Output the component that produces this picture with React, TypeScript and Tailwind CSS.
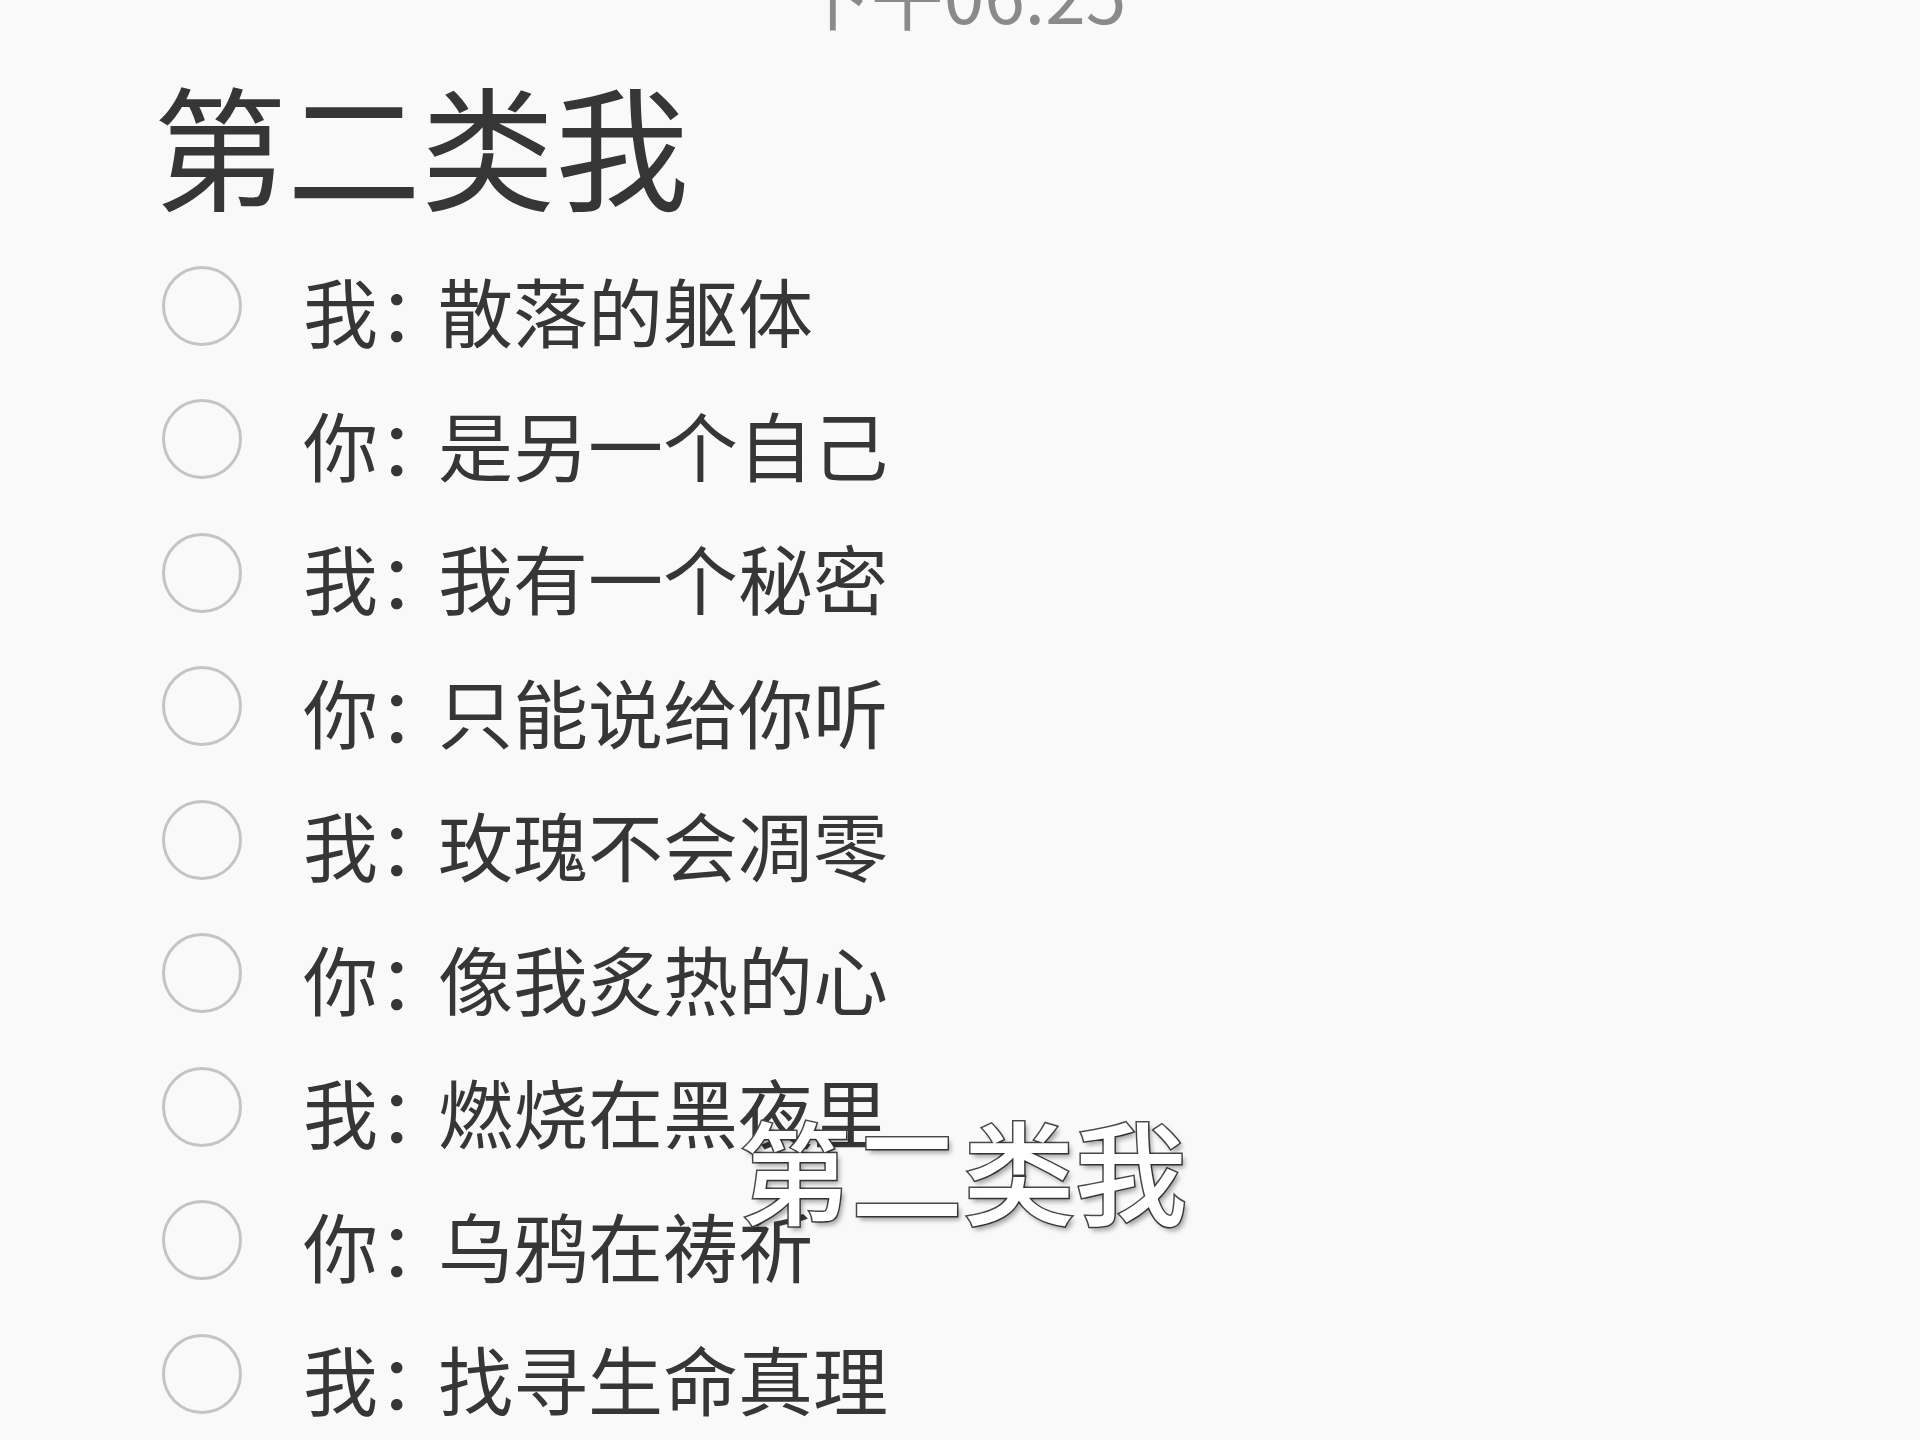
import React from "react";

const lines = [
  "我：散落的躯体",
  "你：是另一个自己",
  "我：我有一个秘密",
  "你：只能说给你听",
  "我：玫瑰不会凋零",
  "你：像我炙热的心",
  "我：燃烧在黑夜里",
  "你：乌鸦在祷祈",
  "我：找寻生命真理",
];

export default function App() {
  return (
    <div
      className="relative w-[1920px] h-[1440px] overflow-hidden bg-[#f9f9f9] text-[#363636]"
      style={{ fontFamily: '"Noto Sans CJK SC", "Noto Sans", sans-serif' }}
    >
      <div className="flex justify-center pl-[4px] -mt-[44px] h-[73px]">
        <span className="text-[73px] leading-none font-normal text-[#8a8a8a]">下午06:25</span>
      </div>
      <div className="flex flex-col pl-[159px]">
        <h1 className="text-[134px] leading-none font-normal mt-[47px] -ml-[6px] h-[163px]">第二类我</h1>
        <div className="flex flex-col pl-[3px]">
          {lines.map((t, i) => {
            const [who, rest] = t.split("：");
            return (
              <div key={i} className="flex items-center h-[133.5px] gap-[61px]">
                <div className="w-[80px] h-[80px] rounded-full border-[3px] border-[#c4c4c4] shrink-0" />
                <span className="text-[75px] leading-none pt-[8px] whitespace-nowrap">
                  {who}
                  <span className="tracking-[-0.2em]">：</span>
                  {rest}
                </span>
              </div>
            );
          })}
        </div>
      </div>
      <div className="absolute left-0 right-0 top-[1112px] flex justify-center pl-[6px]">
        <span className="text-[112px] leading-none font-medium text-white [-webkit-text-stroke:3px_#4a4a4a] [paint-order:stroke_fill] [text-shadow:3px_4px_5px_rgba(0,0,0,0.35)]">
          第二类我
        </span>
      </div>
    </div>
  );
}
